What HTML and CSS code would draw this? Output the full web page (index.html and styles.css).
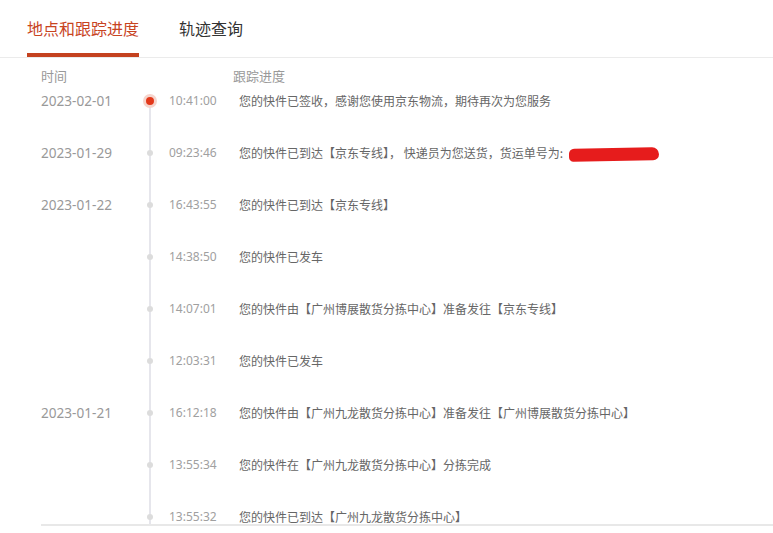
FILE: index.html
```html
<!DOCTYPE html>
<html lang="zh-CN">
<head>
<meta charset="utf-8">
<title>地点和跟踪进度</title>
<link rel="stylesheet" href="styles.css">
</head>
<body>
<div class="tabs">
  <div class="tab active">地点和跟踪进度</div>
  <div class="tab">轨迹查询</div>
</div>
<div class="track">
  <div class="head">
    <span class="h-date">时间</span>
    <span class="h-desc">跟踪进度</span>
  </div>
  <div class="row first">
    <span class="date">2023-02-01</span>
    <span class="node"><i class="dot cur"></i></span>
    <span class="time">10:41:00</span>
    <span class="desc">您的快件已签收，感谢您使用京东物流，期待再次为您服务</span>
  </div>
  <div class="row">
    <span class="date">2023-01-29</span>
    <span class="node"><i class="dot"></i></span>
    <span class="time">09:23:46</span>
    <span class="desc">您的快件已到达【京东专线】， 快递员为您送货，货运单号为: <span class="redact"></span></span>
  </div>
  <div class="row">
    <span class="date">2023-01-22</span>
    <span class="node"><i class="dot"></i></span>
    <span class="time">16:43:55</span>
    <span class="desc">您的快件已到达【京东专线】</span>
  </div>
  <div class="row">
    <span class="date"></span>
    <span class="node"><i class="dot"></i></span>
    <span class="time">14:38:50</span>
    <span class="desc">您的快件已发车</span>
  </div>
  <div class="row">
    <span class="date"></span>
    <span class="node"><i class="dot"></i></span>
    <span class="time">14:07:01</span>
    <span class="desc">您的快件由【广州博展散货分拣中心】准备发往【京东专线】</span>
  </div>
  <div class="row">
    <span class="date"></span>
    <span class="node"><i class="dot"></i></span>
    <span class="time">12:03:31</span>
    <span class="desc">您的快件已发车</span>
  </div>
  <div class="row">
    <span class="date">2023-01-21</span>
    <span class="node"><i class="dot"></i></span>
    <span class="time">16:12:18</span>
    <span class="desc">您的快件由【广州九龙散货分拣中心】准备发往【广州博展散货分拣中心】</span>
  </div>
  <div class="row">
    <span class="date"></span>
    <span class="node"><i class="dot"></i></span>
    <span class="time">13:55:34</span>
    <span class="desc">您的快件在【广州九龙散货分拣中心】分拣完成</span>
  </div>
  <div class="row">
    <span class="date"></span>
    <span class="node"><i class="dot"></i></span>
    <span class="time">13:55:32</span>
    <span class="desc">您的快件已到达【广州九龙散货分拣中心】</span>
  </div>
</div>
</body>
</html>
```
FILE: styles.css
```css
* { box-sizing: border-box; }
html, body { margin: 0; padding: 0; background: #fff; }
body {
  font-family: "Noto Sans", "Noto Sans CJK SC", sans-serif;
  color: #666;
  width: 773px;
  height: 533px;
  overflow: hidden;
}
.tabs {
  display: flex;
  gap: 40px;
  padding-left: 27px;
  height: 58px;
  border-bottom: 1px solid #ebebeb;
}
.tab {
  font-size: 16px;
  line-height: 20px;
  padding-top: 18px;
  height: 57px;
  color: #333;
  font-family: "Noto Sans CJK SC", sans-serif;
}
.tab.active {
  color: #c8441f;
  border-bottom: 4px solid #c4421f;
}
.track {
  margin-left: 41px;
  height: 468px;
  overflow: hidden;
  border-bottom: 2px solid #e8e8e8;
}
.head {
  display: flex;
  padding-top: 9px;
  height: 33px;
  font-size: 13px;
  line-height: 18px;
  color: #999;
  font-family: "Noto Sans CJK SC", sans-serif;
}
.h-date { width: 192px; }
.row {
  display: flex;
  height: 52px;
  line-height: 20px;
}
.date {
  width: 97px;
  font-size: 13.6px;
  color: #999;
}
.node {
  position: relative;
  width: 24px;
  margin-right: 7px;
}
.node::before {
  content: "";
  position: absolute;
  left: 11px;
  top: 0;
  bottom: 0;
  width: 2px;
  background: #e6e6ec;
}
.first .node::before { top: 10px; }
.dot {
  position: absolute;
  left: 9px;
  top: 7px;
  width: 6px;
  height: 6px;
  border-radius: 50%;
  background: #dcdcdc;
}
.dot.cur {
  left: 5px;
  top: 3px;
  width: 14px;
  height: 14px;
  background: #e3381a;
  border: 3px solid #f6d4cc;
}
.time {
  width: 70px;
  font-size: 12px;
  color: #a0a0a0;
}
.desc {
  font-size: 12px;
  color: #666;
  font-family: "Noto Sans CJK SC", sans-serif;
  white-space: nowrap;
}
.redact {
  display: inline-block;
  vertical-align: middle;
  width: 90px;
  height: 13px;
  margin-left: 3px;
  background: #e61c1c;
  border-radius: 6px 8px 7px 5px;
  transform: rotate(-1deg);
}
```
